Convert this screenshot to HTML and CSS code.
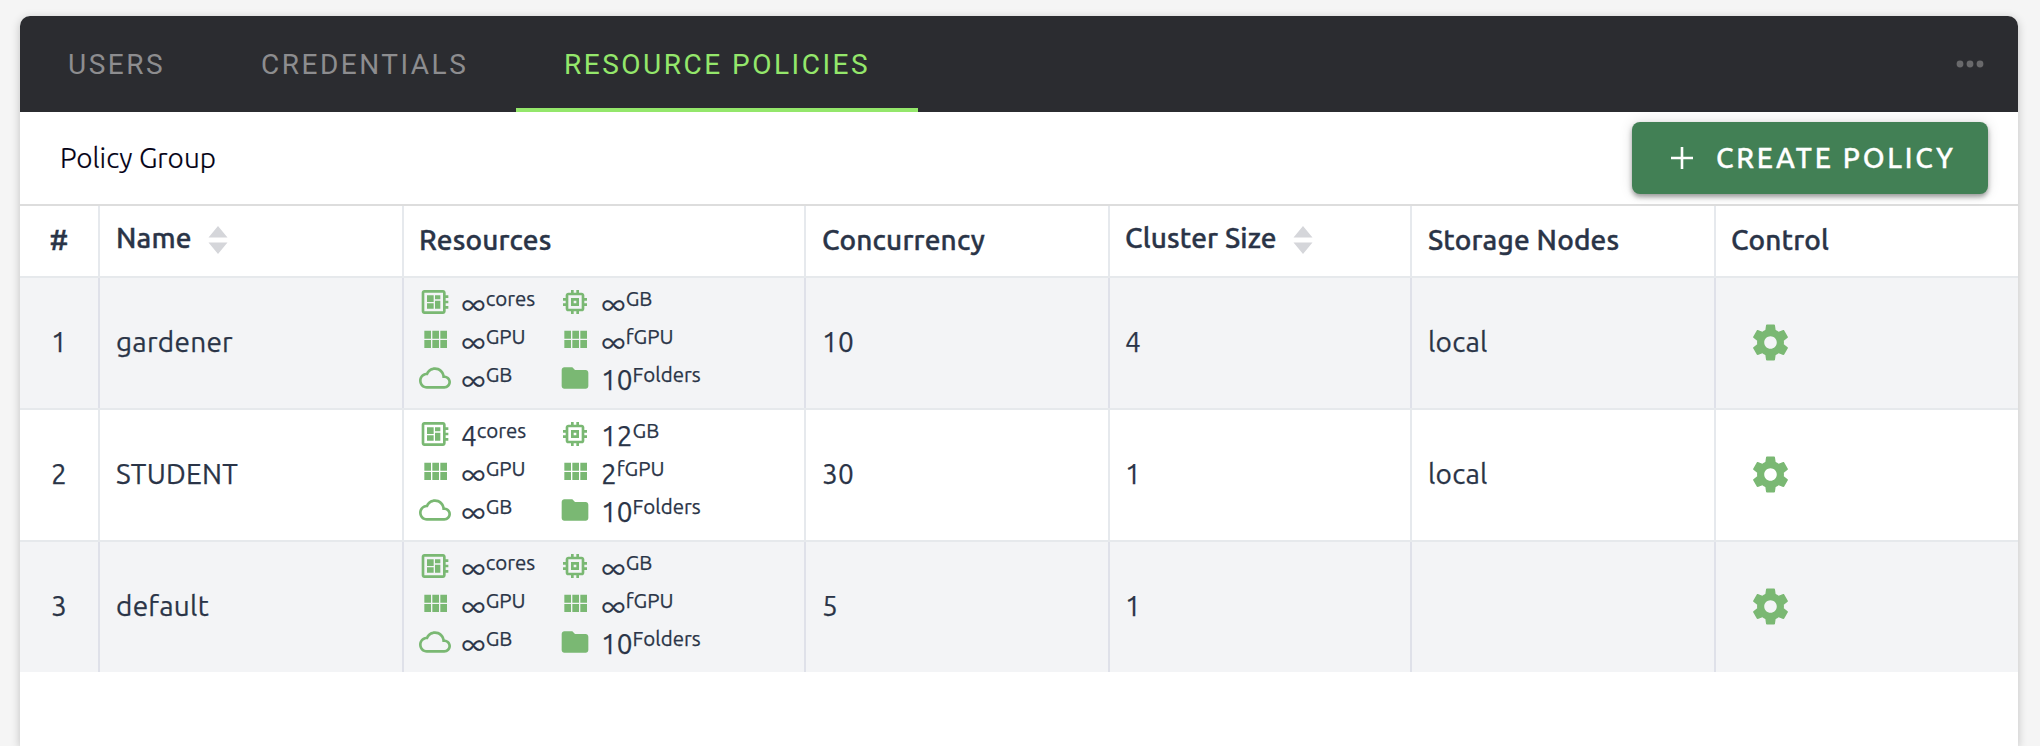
FILE: index.html
```
<!DOCTYPE html>
<html lang="en">
<head>
<meta charset="utf-8">
<title>Resource Policies</title>
<link rel="stylesheet" href="styles.css">
</head>
<body>
<svg class="defs" width="0" height="0">
  <symbol id="board" viewBox="0 0 24 24"><path d="M22 9V7h-2V5c0-1.100-.9-2-2-2H4c-1.100 0-2 .9-2 2v14c0 1.100.9 2 2 2h14c1.100 0 2-.9 2-2v-2h2v-2h-2v-2h2v-2h-2V9h2zm-4 10H4V5h14v14zM6 13h5v4H6zm6-6h4v3h-4zM6 7h5v5H6zm6 4h4v6h-4z"/></symbol>
  <symbol id="memory" viewBox="0 0 24 24"><path d="M15 9H9v6h6V9zm-2 4h-2v-2h2v2zm8-2V9h-2V7c0-1.100-.9-2-2-2h-2V3h-2v2h-2V3H9v2H7c-1.100 0-2 .9-2 2v2H3v2h2v2H3v2h2v2c0 1.100.9 2 2 2h2v2h2v-2h2v2h2v-2h2c1.100 0 2-.9 2-2v-2h2v-2h-2v-2h2zm-4 6H7V7h10v10z"/></symbol>
  <symbol id="module" viewBox="0 0 24 24"><path d="M4 11h5V5H4v6zm0 7h5v-6H4v6zm6 0h5v-6h-5v6zm6 0h5v-6h-5v6zm-6-7h5V5h-5v6zm6-6v6h5V5h-5z"/></symbol>
  <symbol id="cloud" viewBox="0 0 24 24"><path d="M19.350 10.040C18.670 6.590 15.640 4 12 4 9.110 4 6.600 5.640 5.350 8.040 2.340 8.360 0 10.910 0 14c0 3.310 2.690 6 6 6h13c2.760 0 5-2.240 5-5 0-2.640-2.050-4.780-4.650-4.960zM19 18H6c-2.210 0-4-1.790-4-4s1.790-4 4-4h.710C7.370 7.690 9.480 6 12 6c3.040 0 5.500 2.460 5.500 5.500v.5H19c1.660 0 3 1.340 3 3s-1.340 3-3 3z"/></symbol>
  <symbol id="folder" viewBox="0 0 24 24"><path d="M10 4H4c-1.100 0-1.990.9-1.990 2L2 18c0 1.100.9 2 2 2h16c1.100 0 2-.9 2-2V8c0-1.100-.9-2-2-2h-8l-2-2z"/></symbol>
  <symbol id="gear" viewBox="0 0 24 24"><path d="M19.430 12.980c.04-.32.07-.64.07-.98s-.03-.66-.07-.98l2.110-1.650c.19-.15.24-.42.12-.64l-2-3.460c-.12-.22-.39-.3-.61-.22l-2.490 1c-.52-.4-1.080-.73-1.690-.98l-.38-2.650C14.460 2.180 14.250 2 14 2h-4c-.25 0-.46.18-.49.42l-.38 2.650c-.61.25-1.170.59-1.690.98l-2.490-1c-.23-.09-.49 0-.61.22l-2 3.460c-.13.22-.07.49.12.64l2.110 1.650c-.04.32-.07.65-.07.98s.03.66.07.98l-2.110 1.650c-.19.15-.24.42-.12.64l2 3.460c.12.22.39.3.61.22l2.490-1c.52.4 1.080.73 1.690.98l.38 2.650c.03.24.24.42.49.42h4c.25 0 .46-.18.49-.42l.38-2.650c.61-.25 1.170-.59 1.690-.98l2.490 1c.23.09.49 0 .61-.22l2-3.460c.12-.22.07-.49-.12-.64l-2.110-1.650zM12 15.500c-1.930 0-3.500-1.570-3.500-3.500s1.570-3.500 3.500-3.500 3.500 1.570 3.500 3.500-1.570 3.500-3.500 3.500z"/></symbol>
  <symbol id="sort" viewBox="0 0 20 28"><path d="M10 0L19.500 11.500H.5zM10 28L.5 16.500h19z"/></symbol>
</svg>

<main class="card">
  <nav class="tabs">
    <a class="tab tab-users">USERS</a>
    <a class="tab tab-credentials">CREDENTIALS</a>
    <a class="tab tab-policies active">RESOURCE POLICIES</a>
    <svg class="more" viewBox="0 0 28 8"><circle cx="4" cy="4" r="3.400"/><circle cx="14" cy="4" r="3.400"/><circle cx="24" cy="4" r="3.400"/></svg>
  </nav>
  <header class="toolbar">
    <h1 class="title">Policy Group</h1>
    <button class="create">
      <svg class="plus" viewBox="0 0 22 22"><path d="M11 0v22M0 11h22"/></svg>
      <span class="label">CREATE POLICY</span>
    </button>
  </header>
  <section class="grid">
    <div class="row head">
      <div class="cell num">#</div>
      <div class="cell sortable">Name<svg class="sort"><use href="#sort"/></svg></div>
      <div class="cell wide">Resources</div>
      <div class="cell">Concurrency</div>
      <div class="cell sortable snug">Cluster Size<svg class="sort"><use href="#sort"/></svg></div>
      <div class="cell">Storage Nodes</div>
      <div class="cell snug">Control</div>
    </div>
    <div class="row odd">
      <div class="cell num">1</div>
      <div class="cell">gardener</div>
      <div class="cell resources">
        <div class="res"><svg><use href="#board"/></svg><p><b>∞</b><sup>cores</sup></p></div>
        <div class="res"><svg><use href="#memory"/></svg><p><b>∞</b><sup>GB</sup></p></div>
        <div class="res"><svg><use href="#module"/></svg><p><b>∞</b><sup>GPU</sup></p></div>
        <div class="res"><svg><use href="#module"/></svg><p><b>∞</b><sup>fGPU</sup></p></div>
        <div class="res"><svg><use href="#cloud"/></svg><p><b>∞</b><sup>GB</sup></p></div>
        <div class="res"><svg><use href="#folder"/></svg><p>10<sup>Folders</sup></p></div>
      </div>
      <div class="cell">10</div>
      <div class="cell snug">4</div>
      <div class="cell">local</div>
      <div class="cell control"><svg class="gear"><use href="#gear"/></svg></div>
    </div>
    <div class="row">
      <div class="cell num">2</div>
      <div class="cell">STUDENT</div>
      <div class="cell resources">
        <div class="res"><svg><use href="#board"/></svg><p>4<sup>cores</sup></p></div>
        <div class="res"><svg><use href="#memory"/></svg><p>12<sup>GB</sup></p></div>
        <div class="res"><svg><use href="#module"/></svg><p><b>∞</b><sup>GPU</sup></p></div>
        <div class="res"><svg><use href="#module"/></svg><p>2<sup>fGPU</sup></p></div>
        <div class="res"><svg><use href="#cloud"/></svg><p><b>∞</b><sup>GB</sup></p></div>
        <div class="res"><svg><use href="#folder"/></svg><p>10<sup>Folders</sup></p></div>
      </div>
      <div class="cell">30</div>
      <div class="cell snug">1</div>
      <div class="cell">local</div>
      <div class="cell control"><svg class="gear"><use href="#gear"/></svg></div>
    </div>
    <div class="row odd">
      <div class="cell num">3</div>
      <div class="cell">default</div>
      <div class="cell resources">
        <div class="res"><svg><use href="#board"/></svg><p><b>∞</b><sup>cores</sup></p></div>
        <div class="res"><svg><use href="#memory"/></svg><p><b>∞</b><sup>GB</sup></p></div>
        <div class="res"><svg><use href="#module"/></svg><p><b>∞</b><sup>GPU</sup></p></div>
        <div class="res"><svg><use href="#module"/></svg><p><b>∞</b><sup>fGPU</sup></p></div>
        <div class="res"><svg><use href="#cloud"/></svg><p><b>∞</b><sup>GB</sup></p></div>
        <div class="res"><svg><use href="#folder"/></svg><p>10<sup>Folders</sup></p></div>
      </div>
      <div class="cell">5</div>
      <div class="cell snug">1</div>
      <div class="cell"></div>
      <div class="cell control"><svg class="gear"><use href="#gear"/></svg></div>
    </div>
  </section>
</main>
</body>
</html>
```
FILE: styles.css
```
* { box-sizing: border-box; }
body {
  margin: 0;
  background: #f5f5f5;
  color: #2a3447;
  font-family: Ubuntu, "Noto Sans", sans-serif;
  font-size: 28px;
}
.defs { display: block; }
.card {
  margin: 16px 22px 0 20px;
  height: 730px;
  background: #fff;
  border-radius: 10px 10px 0 0;
  box-shadow: 0 2px 10px rgba(0, 0, 0, .22);
}
.tabs {
  display: flex;
  align-items: stretch;
  height: 96px;
  background: #2b2c30;
  border-radius: 10px 10px 0 0;
  font-family: Roboto, sans-serif;
  font-size: 28px;
  letter-spacing: 2.5px;
  color: #8d8d8f;
}
.tab {
  display: flex;
  align-items: center;
  padding: 4px 0 0 48px;
  border-bottom: 4px solid transparent;
}
.tab-users { width: 193px; }
.tab-credentials { width: 303px; }
.tab-policies { width: 402px; }
.active { color: #94e76b; border-color: #94e76b; }
.more { width: 28px; height: 8px; margin: auto 34px auto auto; fill: #69696b; }
.toolbar {
  display: flex;
  align-items: center;
  justify-content: space-between;
  height: 94px;
  padding: 0 30px 0 40px;
  border-bottom: 2px solid #ddd;
}
.title {
  margin: 0;
  padding-bottom: 2px;
  font-size: 28px;
  font-weight: 300;
  color: #020014;
  -webkit-text-stroke: .2px;
}
.create {
  display: flex;
  align-items: center;
  gap: 23px;
  width: 356px;
  height: 72px;
  padding: 0 0 0 39px;
  border: 0;
  border-radius: 8px;
  background: #428055;
  box-shadow: 0 3px 5px rgba(0, 0, 0, .36), 0 0 14px rgba(0, 0, 0, .12);
  color: #fff;
  font-family: inherit;
  font-size: 28px;
  font-weight: 500;
  letter-spacing: 2.75px;
  white-space: nowrap;
  -webkit-text-stroke: .35px;
}
.label { padding-bottom: 2px; }
.plus { width: 22px; height: 22px; fill: none; stroke: #fff; stroke-width: 2.6; }
.row {
  display: grid;
  grid-template-columns: 80px 304px 402px 304px 302px 304px 302px;
  height: 132px;
  border-bottom: 2px solid #e6e9ec;
  -webkit-text-stroke: .25px;
}
.row svg { stroke: none; }
.row:last-child { height: 130px; border-bottom: 0; }
.odd { background: #f3f4f6; }
.head { height: 72px; font-weight: 500; -webkit-text-stroke: .4px; }
.cell {
  display: flex;
  align-items: center;
  padding: 0 0 4px 16px;
  border-right: 2px solid #e6e9ed;
  letter-spacing: .25px;
}
.head .cell { letter-spacing: .17px; }
.odd .cell { border-right-color: #dfe1e9; }
.row .cell:last-child { border-right: 0; }
.row .wide, .row .snug { padding-left: 15px; }
.row .num { justify-content: center; padding: 0 0 4px; }
.row .sortable { padding-bottom: 7px; }
.sort { width: 20px; height: 28px; margin: 5px 0 0 16px; fill: #d5d6da; }
.row .resources {
  display: grid;
  grid-template-columns: 140px 180px;
  grid-auto-rows: 38px;
  align-items: start;
  align-content: start;
  padding: 8px 0 0 15px;
  letter-spacing: 0;
}
.res { display: flex; align-items: flex-start; gap: 10px; }
.res svg { width: 32px; height: 32px; fill: #7ab873; flex: none; }
.res p { margin: 0; line-height: 35px; white-space: nowrap; }
.res b { font-family: Inter, sans-serif; font-size: 27px; font-weight: 300; line-height: 0; vertical-align: 0; }
.res sup { font-size: 20.5px; line-height: 0; vertical-align: 8px; }
.row .control { padding: 0 0 1px 33px; }
.gear { width: 43px; height: 43px; fill: #7ab873; }
```
